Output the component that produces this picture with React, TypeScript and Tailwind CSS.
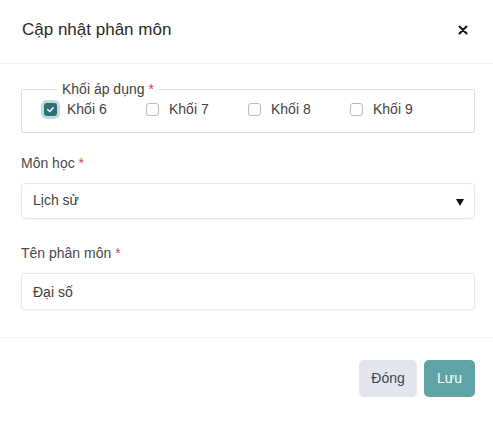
import React from "react";

function Check({ checked, label }: { checked?: boolean; label: string }) {
  return (
    <div className="flex w-[102px] items-center gap-[10px]">
      {checked ? (
        <span className="flex h-[13px] w-[13px] items-center justify-center rounded-[3px] bg-[#2e6f74] shadow-[0_0_0_3px_rgba(70,150,155,0.35)]">
          <svg width="9" height="9" viewBox="0 0 10 10">
            <path d="M2 5.2 L4.2 7.3 L8 3" fill="none" stroke="#fff" strokeWidth="1.7" strokeLinecap="round" strokeLinejoin="round" />
          </svg>
        </span>
      ) : (
        <span className="h-[13px] w-[13px] rounded-[3px] border border-[#b9bcc2] bg-white" />
      )}
      <span className="text-[14px] leading-[20px] text-[#444]">{label}</span>
    </div>
  );
}

export default function App() {
  return (
    <div className="h-[421px] w-[493px] bg-white text-[#3d3d3d]" style={{ fontFamily: "'Liberation Sans', Arial, sans-serif" }}>
      <div className="flex h-[64px] items-center justify-between border-b border-[#eef0f2] pb-[4px] pl-[22px] pr-[25px]">
        <h1 className="text-[17px] font-normal leading-[24px] text-[#2a2a2a]">Cập nhật phân môn</h1>
        <svg width="10" height="10" viewBox="0 0 10 10">
          <path d="M1.5 1.5 L8.5 8.5 M8.5 1.5 L1.5 8.5" stroke="#111" strokeWidth="2" strokeLinecap="round" />
        </svg>
      </div>

      <div className="flex flex-col pb-[27px] pl-[21px] pr-[18px] pt-[15px]">
        <fieldset className="h-[54px] rounded-[2px] border border-[#dcdfe3] px-[22px]">
          <legend className="ml-[13px] px-[5px] text-[14px] leading-[20px] text-[#444]">
            Khối áp dụng <span className="text-[#e53e3e]">*</span>
          </legend>
          <div className="flex items-center">
            <Check checked label="Khối 6" />
            <Check label="Khối 7" />
            <Check label="Khối 8" />
            <Check label="Khối 9" />
          </div>
        </fieldset>

        <label className="mt-[20px] text-[14px] leading-[20px] text-[#4a4a4a]">
          Môn học <span className="text-[#e53e3e]">*</span>
        </label>
        <div className="mt-[10px] flex h-[36px] items-center justify-between rounded-[4px] border border-[#e6e8eb] pl-[11px] pr-[10px] shadow-[0_1px_2px_rgba(0,0,0,0.04)]">
          <span className="-mt-[3px] text-[14px] leading-[20px] text-[#3d3d3d]">Lịch sử</span>
          <svg width="8" height="7" viewBox="0 0 8 7" className="mt-[2px]">
            <polygon points="0,0 8,0 4,7" fill="#111" />
          </svg>
        </div>

        <label className="mt-[24px] text-[14px] leading-[20px] text-[#4a4a4a]">
          Tên phân môn <span className="text-[#e53e3e]">*</span>
        </label>
        <div className="mt-[10px] flex h-[37px] items-center rounded-[4px] border border-[#e6e8eb] pl-[11px] shadow-[0_1px_2px_rgba(0,0,0,0.04)]">
          <span className="text-[14px] leading-[20px] text-[#3d3d3d]">Đại số</span>
        </div>
      </div>

      <div className="flex justify-end gap-[7px] border-t border-[#eef0f2] pr-[18px] pt-[22px]">
        <button className="h-[37px] w-[58px] rounded-[5px] bg-[#e4e6ef] text-[14px] text-[#3f4254]">Đóng</button>
        <button className="h-[37px] w-[51px] rounded-[5px] bg-[#5ea3a6] text-[14px] text-white">Lưu</button>
      </div>
    </div>
  );
}
